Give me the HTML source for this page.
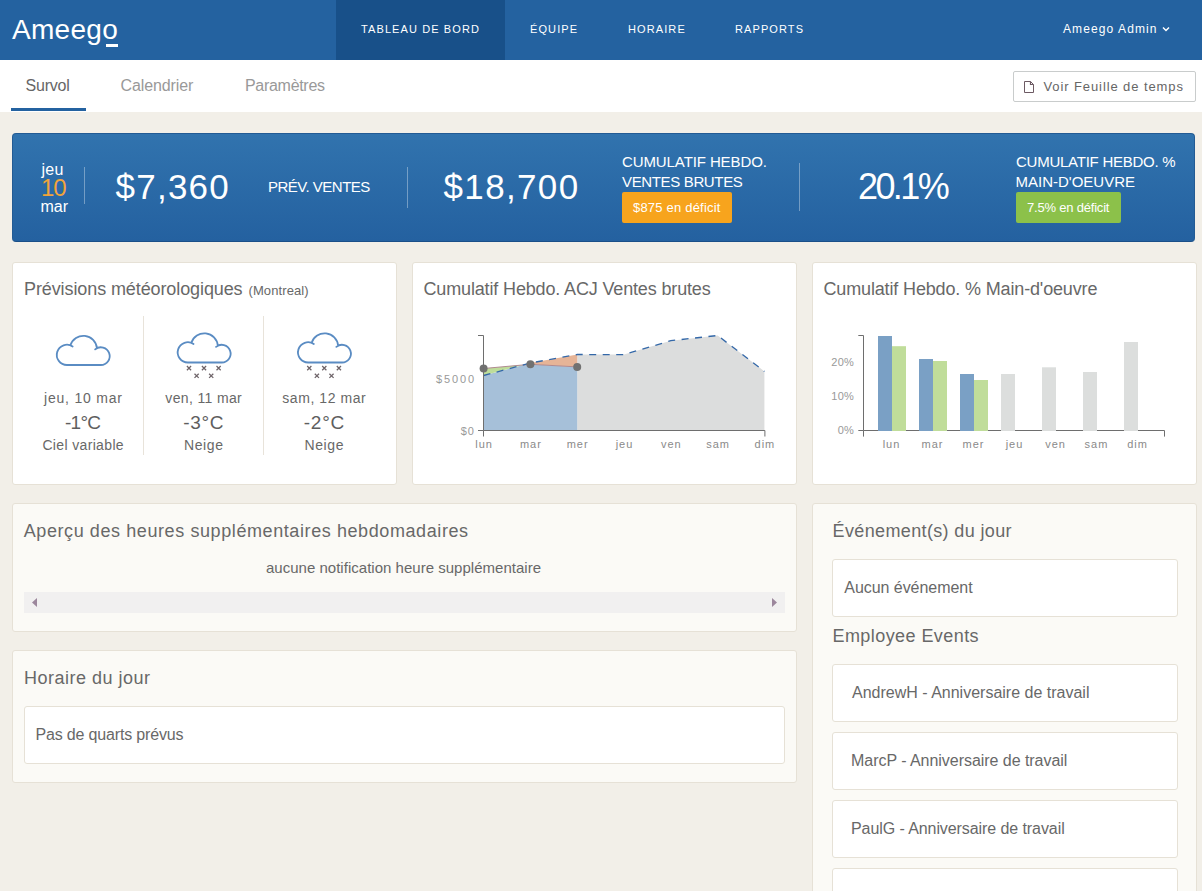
<!DOCTYPE html>
<html><head><meta charset="utf-8"><title>Ameego</title>
<style>
*{margin:0;padding:0;box-sizing:border-box}
html,body{width:1202px;height:891px;overflow:hidden;background:#f2efe8;font-family:"Liberation Sans",sans-serif;color:#555}
.a{position:absolute;white-space:nowrap}
</style></head><body>
<div class="a" style="left:0px;top:0px;width:1202px;height:60px;background:#2462a0"></div>
<div class="a" style="left:336px;top:0px;width:169px;height:60px;background:#185089"></div>
<div class="a" style="left:12.0px;top:16.30px;font-size:28px;line-height:28px;letter-spacing:0.3px;color:#fff;">Ameego</div>
<div class="a" style="left:105.5px;top:44.3px;width:12px;height:2.6px;background:#fff"></div>
<div class="a" style="left:361.0px;top:23.69px;font-size:11px;line-height:11px;letter-spacing:1.1px;color:#fff;">TABLEAU DE BORD</div>
<div class="a" style="left:530.0px;top:23.69px;font-size:11px;line-height:11px;letter-spacing:1.1px;color:#fff;">ÉQUIPE</div>
<div class="a" style="left:628.0px;top:23.69px;font-size:11px;line-height:11px;letter-spacing:1.1px;color:#fff;">HORAIRE</div>
<div class="a" style="left:735.0px;top:23.69px;font-size:11px;line-height:11px;letter-spacing:1.1px;color:#fff;">RAPPORTS</div>
<div class="a" style="left:1063.0px;top:23.24px;font-size:12px;line-height:12px;letter-spacing:1.1px;color:#fff;">Ameego Admin</div>
<svg class="a" style="left:1160px;top:24px" width="12" height="10"><path d="M3 3.5 L6 6.5 L9 3.5" fill="none" stroke="#fff" stroke-width="1.5"/></svg>
<div class="a" style="left:0px;top:60px;width:1202px;height:52px;background:#fff"></div>
<div class="a" style="left:25.5px;top:77.96px;font-size:16px;line-height:16px;letter-spacing:-0.2px;color:#666;">Survol</div>
<div class="a" style="left:120.5px;top:77.96px;font-size:16px;line-height:16px;letter-spacing:-0.1px;color:#999;">Calendrier</div>
<div class="a" style="left:245.0px;top:77.96px;font-size:16px;line-height:16px;letter-spacing:-0.3px;color:#999;">Paramètres</div>
<div class="a" style="left:11px;top:108px;width:75px;height:3px;background:#2462a0"></div>
<div class="a" style="left:1013px;top:71px;width:183px;height:31px;background:#fff;border:1px solid #c9cccc;border-radius:2px"></div>
<svg class="a" style="left:1020px;top:78px" width="18" height="18"><path d="M4.5 3.5 H10.5 L13.5 6.5 V14.5 H4.5 Z" fill="none" stroke="#6d5a63" stroke-width="1"/><path d="M10.5 3.5 V6.5 H13.5" fill="none" stroke="#6d5a63" stroke-width="1.2"/></svg>
<div class="a" style="left:1043.5px;top:80.00px;font-size:13px;line-height:13px;letter-spacing:0.9px;color:#666;">Voir Feuille de temps</div>
<div class="a" style="left:12px;top:133px;width:1183px;height:109px;background:linear-gradient(#3173ae,#2461a0);border:1px solid #235b94;border-bottom-color:#1a4f88;border-radius:4px"></div>
<div class="a" style="left:41.5px;top:161.66px;font-size:16px;line-height:16px;letter-spacing:0.3px;color:#fff;">jeu</div>
<div class="a" style="left:41.0px;top:175.68px;font-size:24px;line-height:24px;letter-spacing:-1px;color:#f2a43a;">10</div>
<div class="a" style="left:40.5px;top:198.66px;font-size:16px;line-height:16px;letter-spacing:0px;color:#fff;">mar</div>
<div class="a" style="left:84px;top:167px;width:1px;height:37px;background:rgba(255,255,255,0.35)"></div>
<div class="a" style="left:115.5px;top:169.07px;font-size:35px;line-height:35px;letter-spacing:1.25px;color:#fff;">$7,360</div>
<div class="a" style="left:268.0px;top:179.30px;font-size:15px;line-height:15px;letter-spacing:-0.5px;color:#fff;">PRÉV. VENTES</div>
<div class="a" style="left:407px;top:167px;width:1px;height:41px;background:rgba(255,255,255,0.35)"></div>
<div class="a" style="left:443.5px;top:169.07px;font-size:35px;line-height:35px;letter-spacing:1.35px;color:#fff;">$18,700</div>
<div class="a" style="left:622.0px;top:154.30px;font-size:15px;line-height:15px;letter-spacing:-0.1px;color:#fff;">CUMULATIF HEBDO.</div>
<div class="a" style="left:622.0px;top:173.90px;font-size:15px;line-height:15px;letter-spacing:-0.35px;color:#fff;">VENTES BRUTES</div>
<div class="a" style="left:622px;top:192px;width:110px;height:31px;background:#f7a41d;border-radius:2px"></div>
<div class="a" style="left:633.0px;top:201.00px;font-size:13px;line-height:13px;letter-spacing:0.2px;color:#fff;">$875 en déficit</div>
<div class="a" style="left:799px;top:163px;width:1px;height:48px;background:rgba(255,255,255,0.35)"></div>
<div class="a" style="left:858.0px;top:169.03px;font-size:36px;line-height:36px;letter-spacing:-2.6px;color:#fff;">20.1%</div>
<div class="a" style="left:1016.0px;top:154.10px;font-size:15px;line-height:15px;letter-spacing:-0.25px;color:#fff;">CUMULATIF HEBDO. %</div>
<div class="a" style="left:1015.5px;top:174.10px;font-size:15px;line-height:15px;letter-spacing:0px;color:#fff;">MAIN-D'OEUVRE</div>
<div class="a" style="left:1016px;top:192px;width:105px;height:31px;background:#8cc14a;border-radius:2px"></div>
<div class="a" style="left:1027.0px;top:201.00px;font-size:13px;line-height:13px;letter-spacing:-0.2px;color:#fff;">7.5% en déficit</div>
<div class="a" style="left:12px;top:262px;width:385px;height:223px;background:#fff;border:1px solid #e6e1d6;border-radius:3px"></div>
<div class="a" style="left:412px;top:262px;width:385px;height:223px;background:#fff;border:1px solid #e6e1d6;border-radius:3px"></div>
<div class="a" style="left:812px;top:262px;width:385px;height:223px;background:#fff;border:1px solid #e6e1d6;border-radius:3px"></div>
<div class="a" style="left:24.0px;top:280.06px;font-size:18px;line-height:18px;letter-spacing:-0.1px;color:#686868;">Prévisions météorologiques</div>
<div class="a" style="left:248.5px;top:283.80px;font-size:13px;line-height:13px;letter-spacing:0.1px;color:#686868;">(Montreal)</div>
<div class="a" style="left:143px;top:316px;width:1px;height:139px;background:#e8e3da"></div>
<div class="a" style="left:263px;top:316px;width:1px;height:139px;background:#e8e3da"></div>
<div class="a" style="left:-116.6px;width:400px;text-align:center;top:391.45px;font-size:14px;line-height:14px;letter-spacing:0.8px;color:#686868;">jeu, 10 mar</div>
<div class="a" style="left:-117.4px;width:400px;text-align:center;top:412.62px;font-size:19px;line-height:19px;letter-spacing:-0.8px;color:#5e5e5e;">-1°C</div>
<div class="a" style="left:-116.8px;width:400px;text-align:center;top:437.75px;font-size:14px;line-height:14px;letter-spacing:0.35px;color:#686868;">Ciel variable</div>
<div class="a" style="left:3.7px;width:400px;text-align:center;top:391.45px;font-size:14px;line-height:14px;letter-spacing:0.35px;color:#686868;">ven, 11 mar</div>
<div class="a" style="left:3.8px;width:400px;text-align:center;top:412.62px;font-size:19px;line-height:19px;letter-spacing:0.7px;color:#5e5e5e;">-3°C</div>
<div class="a" style="left:3.8px;width:400px;text-align:center;top:437.75px;font-size:14px;line-height:14px;letter-spacing:0.6px;color:#686868;">Neige</div>
<div class="a" style="left:124.3px;width:400px;text-align:center;top:391.45px;font-size:14px;line-height:14px;letter-spacing:0.56px;color:#686868;">sam, 12 mar</div>
<div class="a" style="left:124.4px;width:400px;text-align:center;top:412.62px;font-size:19px;line-height:19px;letter-spacing:0.8px;color:#5e5e5e;">-2°C</div>
<div class="a" style="left:124.3px;width:400px;text-align:center;top:437.75px;font-size:14px;line-height:14px;letter-spacing:0.6px;color:#686868;">Neige</div>
<div class="a" style="left:423.5px;top:280.06px;font-size:18px;line-height:18px;letter-spacing:-0.15px;color:#686868;">Cumulatif Hebdo. ACJ Ventes brutes</div>
<div class="a" style="left:823.5px;top:280.06px;font-size:18px;line-height:18px;letter-spacing:-0.15px;color:#686868;">Cumulatif Hebdo. % Main-d'oeuvre</div>
<div class="a" style="left:12px;top:503px;width:785px;height:129px;background:#fbfaf6;border:1px solid #e6e1d6;border-radius:3px"></div>
<div class="a" style="left:23.7px;top:521.56px;font-size:18px;line-height:18px;letter-spacing:0.59px;color:#686868;">Aperçu des heures supplémentaires hebdomadaires</div>
<div class="a" style="left:203.5px;width:400px;text-align:center;top:559.50px;font-size:15px;line-height:15px;letter-spacing:0.02px;color:#686868;">aucune notification heure supplémentaire</div>
<div class="a" style="left:24px;top:592px;width:761px;height:21px;background:#f1f0f0"></div>
<svg class="a" style="left:24px;top:592px" width="761" height="21"><path d="M8 10.5 L13 6 V15 Z" fill="#9c879c"/><path d="M753 10.5 L748 6 V15 Z" fill="#9c879c"/></svg>
<div class="a" style="left:12px;top:650px;width:785px;height:133px;background:#fbfaf6;border:1px solid #e6e1d6;border-radius:3px"></div>
<div class="a" style="left:24.0px;top:668.86px;font-size:18px;line-height:18px;letter-spacing:0.5px;color:#686868;">Horaire du jour</div>
<div class="a" style="left:24px;top:706px;width:761px;height:58px;background:#fff;border:1px solid #e6e1d6;border-radius:3px"></div>
<div class="a" style="left:35.5px;top:726.96px;font-size:16px;line-height:16px;letter-spacing:-0.17px;color:#686868;">Pas de quarts prévus</div>
<div class="a" style="left:812px;top:503px;width:385px;height:420px;background:#fbfaf6;border:1px solid #e6e1d6;border-radius:3px"></div>
<div class="a" style="left:832.5px;top:521.56px;font-size:18px;line-height:18px;letter-spacing:0.37px;color:#686868;">Événement(s) du jour</div>
<div class="a" style="left:832px;top:559px;width:346px;height:58px;background:#fff;border:1px solid #e6e1d6;border-radius:3px"></div>
<div class="a" style="left:844.3px;top:580.06px;font-size:16px;line-height:16px;letter-spacing:-0.05px;color:#686868;">Aucun événement</div>
<div class="a" style="left:832.5px;top:626.56px;font-size:18px;line-height:18px;letter-spacing:0.43px;color:#686868;">Employee Events</div>
<div class="a" style="left:832px;top:664px;width:346px;height:58px;background:#fff;border:1px solid #e6e1d6;border-radius:3px"></div>
<div class="a" style="left:852.0px;top:684.66px;font-size:16px;line-height:16px;letter-spacing:0px;color:#686868;">AndrewH - Anniversaire de travail</div>
<div class="a" style="left:832px;top:732px;width:346px;height:58px;background:#fff;border:1px solid #e6e1d6;border-radius:3px"></div>
<div class="a" style="left:851.0px;top:752.66px;font-size:16px;line-height:16px;letter-spacing:-0.04px;color:#686868;">MarcP - Anniversaire de travail</div>
<div class="a" style="left:832px;top:800px;width:346px;height:58px;background:#fff;border:1px solid #e6e1d6;border-radius:3px"></div>
<div class="a" style="left:851.0px;top:820.66px;font-size:16px;line-height:16px;letter-spacing:-0.08px;color:#686868;">PaulG - Anniversaire de travail</div>
<div class="a" style="left:832px;top:868px;width:346px;height:58px;background:#fff;border:1px solid #e6e1d6;border-radius:3px"></div>
<svg class="a" style="left:0;top:0" width="1202" height="891"><path transform="translate(49.1,327.5)" d="M17.85 37.5 A10.15 10.15 0 1 1 23.53 18.94 M21.33 17.81 A13.6 13.6 0 0 1 47.85 20.71 M46.04 21.89 A8.85 8.85 0 1 1 51.75 37.5 L17.85 37.5" fill="none" stroke="#5a8cc3" stroke-width="1.8" stroke-linecap="round"/><path transform="translate(170,325)" d="M17.85 37.5 A10.15 10.15 0 1 1 23.53 18.94 M21.33 17.81 A13.6 13.6 0 0 1 47.85 20.71 M46.04 21.89 A8.85 8.85 0 1 1 51.75 37.5 L17.85 37.5" fill="none" stroke="#5a8cc3" stroke-width="1.8" stroke-linecap="round"/><path transform="translate(290.3,325)" d="M17.85 37.5 A10.15 10.15 0 1 1 23.53 18.94 M21.33 17.81 A13.6 13.6 0 0 1 47.85 20.71 M46.04 21.89 A8.85 8.85 0 1 1 51.75 37.5 L17.85 37.5" fill="none" stroke="#5a8cc3" stroke-width="1.8" stroke-linecap="round"/><path d="M186.9 366.0 L191.1 370.20000000000005 M191.1 366.0 L186.9 370.20000000000005" stroke="#6e6469" stroke-width="1.25"/><path d="M201.9 366.0 L206.1 370.20000000000005 M206.1 366.0 L201.9 370.20000000000005" stroke="#6e6469" stroke-width="1.25"/><path d="M216.5 366.0 L220.7 370.20000000000005 M220.7 366.0 L216.5 370.20000000000005" stroke="#6e6469" stroke-width="1.25"/><path d="M194.5 373.7 L198.7 377.90000000000003 M198.7 373.7 L194.5 377.90000000000003" stroke="#6e6469" stroke-width="1.25"/><path d="M209.1 373.7 L213.29999999999998 377.90000000000003 M213.29999999999998 373.7 L209.1 377.90000000000003" stroke="#6e6469" stroke-width="1.25"/><path d="M307.2 366.0 L311.40000000000003 370.20000000000005 M311.40000000000003 366.0 L307.2 370.20000000000005" stroke="#6e6469" stroke-width="1.25"/><path d="M322.2 366.0 L326.40000000000003 370.20000000000005 M326.40000000000003 366.0 L322.2 370.20000000000005" stroke="#6e6469" stroke-width="1.25"/><path d="M336.8 366.0 L341.00000000000006 370.20000000000005 M341.00000000000006 366.0 L336.8 370.20000000000005" stroke="#6e6469" stroke-width="1.25"/><path d="M314.8 373.7 L319.00000000000006 377.90000000000003 M319.00000000000006 373.7 L314.8 377.90000000000003" stroke="#6e6469" stroke-width="1.25"/><path d="M329.4 373.7 L333.6 377.90000000000003 M333.6 373.7 L329.4 377.90000000000003" stroke="#6e6469" stroke-width="1.25"/><polygon points="577.2,430.4 577.2,354.5 624.0,354.6 670.8,340.7 717.6,335.5 764.4,371.4 764.4,430.4" fill="#dcdddd"/><polygon points="483.6,430.4 483.6,375.5 523.1,365.0 530.4,364.3 577.2,366.9 577.2,430.4" fill="#a6c0d9"/><polygon points="483.6,368.5 523.1,365.0 483.6,375.5" fill="#bedd9a"/><polygon points="523.1,365.0 530.4,363.0 577.2,354.5 577.2,366.9 530.4,364.3" fill="#e6b497"/><polyline points="483.6,368.5 530.4,364.3 577.2,366.9" fill="none" stroke="#b08a90" stroke-width="1"/><polyline points="483.6,375.5 530.4,363.0 577.2,354.5 624.0,354.6 670.8,340.7 717.6,335.5 764.4,371.4" fill="none" stroke="#3468a8" stroke-width="1.3" stroke-dasharray="7,6.5"/><circle cx="483.6" cy="368.5" r="4" fill="#717171"/><circle cx="530.4" cy="364.3" r="4" fill="#717171"/><circle cx="577.2" cy="366.9" r="4" fill="#717171"/><path d="M478 335.5 H483.5 V430.5 H478 M483.5 436.5 V430.5 H764.9 V436.5" fill="none" stroke="#6e6e6e" stroke-width="1"/><path d="M858.3 335.5 H863.5 V430.5 H858.3 M863.5 436.6 V430.5 H1164.5 V436.6" fill="none" stroke="#6e6e6e" stroke-width="1"/><rect x="878" y="336" width="14" height="95.0" fill="#7aa0c5"/><rect x="892" y="346.2" width="14" height="84.8" fill="#c0dd9a"/><rect x="919" y="359" width="14" height="72.0" fill="#7aa0c5"/><rect x="933" y="361" width="14" height="70.0" fill="#c0dd9a"/><rect x="960" y="374" width="14" height="57.0" fill="#7aa0c5"/><rect x="974" y="380" width="14" height="51.0" fill="#c0dd9a"/><rect x="1001" y="374" width="14" height="57.0" fill="#dcdedd"/><rect x="1042" y="367.3" width="14" height="63.7" fill="#dcdedd"/><rect x="1083" y="372" width="14" height="59.0" fill="#dcdedd"/><rect x="1124" y="342" width="14" height="89.0" fill="#dcdedd"/></svg>
<div class="a" style="right:726.1px;top:373.89px;font-size:11px;line-height:11px;letter-spacing:1.85px;color:#999;">$5000</div>
<div class="a" style="right:727.0px;top:425.69px;font-size:11px;line-height:11px;letter-spacing:1.0px;color:#999;">$0</div>
<div class="a" style="left:284.1px;width:400px;text-align:center;top:439.29px;font-size:11px;line-height:11px;letter-spacing:1.0px;color:#8a8a8a;">lun</div>
<div class="a" style="left:330.9px;width:400px;text-align:center;top:439.29px;font-size:11px;line-height:11px;letter-spacing:1.0px;color:#8a8a8a;">mar</div>
<div class="a" style="left:377.7px;width:400px;text-align:center;top:439.29px;font-size:11px;line-height:11px;letter-spacing:1.0px;color:#8a8a8a;">mer</div>
<div class="a" style="left:424.5px;width:400px;text-align:center;top:439.29px;font-size:11px;line-height:11px;letter-spacing:1.0px;color:#8a8a8a;">jeu</div>
<div class="a" style="left:471.3px;width:400px;text-align:center;top:439.29px;font-size:11px;line-height:11px;letter-spacing:1.0px;color:#8a8a8a;">ven</div>
<div class="a" style="left:518.1px;width:400px;text-align:center;top:439.29px;font-size:11px;line-height:11px;letter-spacing:1.0px;color:#8a8a8a;">sam</div>
<div class="a" style="left:564.9px;width:400px;text-align:center;top:439.29px;font-size:11px;line-height:11px;letter-spacing:1.0px;color:#8a8a8a;">dim</div>
<div class="a" style="right:347.8px;top:356.99px;font-size:11px;line-height:11px;letter-spacing:0.3px;color:#999;">20%</div>
<div class="a" style="right:347.8px;top:390.79px;font-size:11px;line-height:11px;letter-spacing:0.3px;color:#999;">10%</div>
<div class="a" style="right:347.8px;top:425.09px;font-size:11px;line-height:11px;letter-spacing:0.3px;color:#999;">0%</div>
<div class="a" style="left:691.5px;width:400px;text-align:center;top:438.89px;font-size:11px;line-height:11px;letter-spacing:1.0px;color:#8a8a8a;">lun</div>
<div class="a" style="left:732.5px;width:400px;text-align:center;top:438.89px;font-size:11px;line-height:11px;letter-spacing:1.0px;color:#8a8a8a;">mar</div>
<div class="a" style="left:773.5px;width:400px;text-align:center;top:438.89px;font-size:11px;line-height:11px;letter-spacing:1.0px;color:#8a8a8a;">mer</div>
<div class="a" style="left:814.5px;width:400px;text-align:center;top:438.89px;font-size:11px;line-height:11px;letter-spacing:1.0px;color:#8a8a8a;">jeu</div>
<div class="a" style="left:855.5px;width:400px;text-align:center;top:438.89px;font-size:11px;line-height:11px;letter-spacing:1.0px;color:#8a8a8a;">ven</div>
<div class="a" style="left:896.5px;width:400px;text-align:center;top:438.89px;font-size:11px;line-height:11px;letter-spacing:1.0px;color:#8a8a8a;">sam</div>
<div class="a" style="left:937.5px;width:400px;text-align:center;top:438.89px;font-size:11px;line-height:11px;letter-spacing:1.0px;color:#8a8a8a;">dim</div>
</body></html>
